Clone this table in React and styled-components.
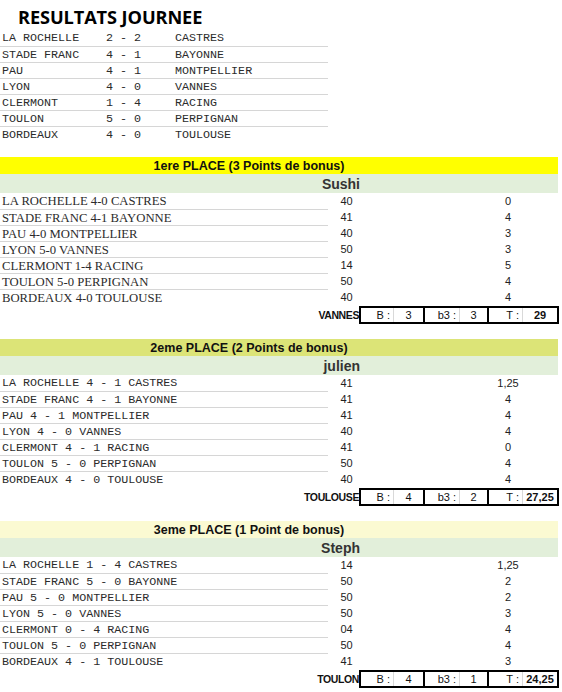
import React from "react";
import styled, { createGlobalStyle } from "styled-components";

const Global = createGlobalStyle`
  html, body { margin: 0; padding: 0; background: #ffffff; }
  body { font-family: "Liberation Sans", Arial, sans-serif; color: #222; }
`;

const Page = styled.div`
  width: 562px;
  display: flex;
  flex-direction: column;
`;

const Title = styled.h1`
  margin: 0;
  height: 30px;
  padding-left: 18px;
  font-family: "Open Sans", "Liberation Sans", sans-serif;
  font-weight: 700;
  font-size: 18.2px;
  line-height: 34px;
  color: #000;
  letter-spacing: -0.1px;
`;

const ResultsTable = styled.div`
  width: 328px;
  display: flex;
  flex-direction: column;
`;

const ResultRow = styled.div`
  display: grid;
  grid-template-columns: 104px 69px 1fr;
  height: 16px;
  box-sizing: border-box;
  padding-left: 2px;
  font-family: "Liberation Mono", "Courier New", monospace;
  font-size: 11.7px;
  line-height: 17px;
  color: #2b2b2b;
  white-space: pre;
  & + & { border-top: 1px solid #d6d6d6; line-height: 16px; }
`;

const Sections = styled.div`
  display: flex;
  flex-direction: column;
  gap: 15px;
  margin-top: 15px;
  width: 558px;
`;

const Section = styled.section`
  display: flex;
  flex-direction: column;
`;

const HeaderBar = styled.div`
  height: 17px;
  background: ${(p) => p.$bg};
  padding-right: 60px;
  text-align: center;
  font-weight: 700;
  font-size: 12.5px;
  line-height: 18px;
  color: #111;
`;

const NameRow = styled.div`
  height: 19px;
  background: #e2efda;
  padding-right: 198px;
  text-align: right;
  font-weight: 700;
  font-size: 14px;
  line-height: 20px;
  color: #333;
`;

const DataRow = styled.div`
  display: grid;
  grid-template-columns: 328px 37px 110px 66px;
  height: 16px;
  font-size: 11px;
  line-height: 17px;
  color: #222;
`;

const Label = styled.div`
  box-sizing: border-box;
  height: 16px;
  padding-left: 2px;
  white-space: pre;
  color: #2b2b2b;
  ${(p) =>
    p.$mono
      ? `font-family: "Liberation Mono", "Courier New", monospace; font-size: 11.7px;`
      : `font-family: "Liberation Serif", "Times New Roman", serif; font-size: 12.7px;`}
  ${DataRow} + ${DataRow} & {
    border-top: 1px solid #d6d6d6;
    line-height: 16px;
  }
`;

const Num = styled.div`
  text-align: center;
`;

const SummaryRow = styled.div`
  display: grid;
  grid-template-columns: 359px 200px;
  height: 19px;
  align-items: end;
`;

const SummaryTeam = styled.div`
  text-align: right;
  font-weight: 700;
  font-size: 10.5px;
  letter-spacing: -0.4px;
  line-height: 18px;
  color: #111;
`;

const Box = styled.div`
  display: grid;
  grid-template-columns: 62px 64px 70px;
  height: 18px;
  box-sizing: border-box;
  border: 2px solid #000;
`;

const Cell = styled.div`
  display: grid;
  grid-template-columns: ${(p) => p.$labelW}px 1fr;
  font-size: 11px;
  line-height: 14px;
  color: #111;
  & + & { border-left: 2px solid #000; }
`;

const CellLabel = styled.span`
  text-align: right;
  padding-right: 3px;
  border-right: 1px solid #d9d9d9;
`;

const CellValue = styled.span`
  text-align: center;
  font-weight: ${(p) => (p.$bold ? 700 : 400)};
`;

const results = [
  ["LA ROCHELLE", "2 - 2", "CASTRES"],
  ["STADE FRANC", "4 - 1", "BAYONNE"],
  ["PAU", "4 - 1", "MONTPELLIER"],
  ["LYON", "4 - 0", "VANNES"],
  ["CLERMONT", "1 - 4", "RACING"],
  ["TOULON", "5 - 0", "PERPIGNAN"],
  ["BORDEAUX", "4 - 0", "TOULOUSE"],
];

const sections = [
  {
    title: "1ere PLACE (3 Points de bonus)",
    bg: "#ffff00",
    name: "Sushi",
    mono: false,
    rows: [
      ["LA ROCHELLE 4-0 CASTRES", "40", "0"],
      ["STADE FRANC 4-1 BAYONNE", "41", "4"],
      ["PAU 4-0 MONTPELLIER", "40", "3"],
      ["LYON 5-0 VANNES", "50", "3"],
      ["CLERMONT 1-4 RACING", "14", "5"],
      ["TOULON 5-0 PERPIGNAN", "50", "4"],
      ["BORDEAUX 4-0 TOULOUSE", "40", "4"],
    ],
    team: "VANNES",
    b: "3",
    b3: "3",
    t: "29",
  },
  {
    title: "2eme PLACE (2 Points de bonus)",
    bg: "#dce477",
    name: "julien",
    mono: true,
    rows: [
      ["LA ROCHELLE 4 - 1 CASTRES", "41", "1,25"],
      ["STADE FRANC 4 - 1 BAYONNE", "41", "4"],
      ["PAU 4 - 1 MONTPELLIER", "41", "4"],
      ["LYON 4 - 0 VANNES", "40", "4"],
      ["CLERMONT 4 - 1 RACING", "41", "0"],
      ["TOULON 5 - 0 PERPIGNAN", "50", "4"],
      ["BORDEAUX 4 - 0 TOULOUSE", "40", "4"],
    ],
    team: "TOULOUSE",
    b: "4",
    b3: "2",
    t: "27,25",
  },
  {
    title: "3eme PLACE (1 Point de bonus)",
    bg: "#fbfad2",
    name: "Steph",
    mono: true,
    rows: [
      ["LA ROCHELLE 1 - 4 CASTRES", "14", "1,25"],
      ["STADE FRANC 5 - 0 BAYONNE", "50", "2"],
      ["PAU 5 - 0 MONTPELLIER", "50", "2"],
      ["LYON 5 - 0 VANNES", "50", "3"],
      ["CLERMONT 0 - 4 RACING", "04", "4"],
      ["TOULON 5 - 0 PERPIGNAN", "50", "4"],
      ["BORDEAUX 4 - 1 TOULOUSE", "41", "3"],
    ],
    team: "TOULON",
    b: "4",
    b3: "1",
    t: "24,25",
  },
];

export default function App() {
  return (
    <Page>
      <Global />
      <Title>RESULTATS JOURNEE</Title>
      <ResultsTable>
        {results.map(([h, s, a]) => (
          <ResultRow key={h}>
            <span>{h}</span>
            <span>{s}</span>
            <span>{a}</span>
          </ResultRow>
        ))}
      </ResultsTable>
      <Sections>
        {sections.map((sec) => (
          <Section key={sec.title}>
            <HeaderBar $bg={sec.bg}>{sec.title}</HeaderBar>
            <NameRow>{sec.name}</NameRow>
            {sec.rows.map(([label, n1, n2]) => (
              <DataRow key={label}>
                <Label $mono={sec.mono}>{label}</Label>
                <Num>{n1}</Num>
                <span />
                <Num>{n2}</Num>
              </DataRow>
            ))}
            <SummaryRow>
              <SummaryTeam>{sec.team}</SummaryTeam>
              <Box>
                <Cell $labelW={33}>
                  <CellLabel>B :</CellLabel>
                  <CellValue>{sec.b}</CellValue>
                </Cell>
                <Cell $labelW={35}>
                  <CellLabel>b3 :</CellLabel>
                  <CellValue>{sec.b3}</CellValue>
                </Cell>
                <Cell $labelW={34}>
                  <CellLabel>T :</CellLabel>
                  <CellValue $bold>{sec.t}</CellValue>
                </Cell>
              </Box>
            </SummaryRow>
          </Section>
        ))}
      </Sections>
    </Page>
  );
}
